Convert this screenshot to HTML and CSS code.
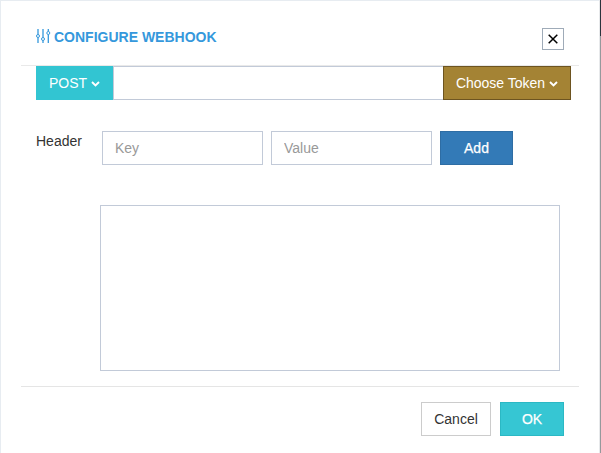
FILE: index.html
```html
<!DOCTYPE html>
<html lang="en">
<head>
<meta charset="utf-8">
<title>Configure Webhook</title>
<link rel="stylesheet" href="styles.css">
</head>
<body>
<main class="dialog">
  <header class="dialog-header">
    <svg class="sliders" width="15" height="15" viewBox="0 0 15 15" fill="none" stroke="currentColor">
      <path stroke-width="1.300" d="M2 1v5.500M2 9.500v5.500M7 1v8.500M7 12.500v2.500M12.300 1v2.500M12.300 6.500V15"/>
      <circle cx="2" cy="8" r="1.500"/><circle cx="7" cy="11" r="1.500"/><circle cx="12.300" cy="5" r="1.500"/>
    </svg>
    <h1 class="title">CONFIGURE WEBHOOK</h1>
    <button class="close" aria-label="Close">
      <svg width="10" height="10" viewBox="0 0 10 10" fill="none" stroke="#000" stroke-width="1.500"><path d="M.7.7l8.600 8.600M9.300.7L.7 9.300"/></svg>
    </button>
  </header>
  <div class="url-row">
    <button class="btn method">POST<svg class="chevron" viewBox="0 0 9 6"><path d="M1 1l3.500 3.500L8 1"/></svg></button>
    <input class="field url" type="text" aria-label="URL">
    <button class="btn token">Choose Token<svg class="chevron" viewBox="0 0 9 6"><path d="M1 1l3.500 3.500L8 1"/></svg></button>
  </div>
  <div class="header-row">
    <span class="label">Header</span>
    <input class="field pair" type="text" placeholder="Key">
    <input class="field pair" type="text" placeholder="Value">
    <button class="btn add">Add</button>
  </div>
  <textarea class="field body" aria-label="Body"></textarea>
  <footer class="dialog-footer">
    <button class="btn cancel">Cancel</button>
    <button class="btn ok">OK</button>
  </footer>
</main>
<div class="backdrop"></div>
</body>
</html>
```
FILE: styles.css
```css
* { box-sizing: border-box; }
body {
  margin: 0;
  height: 453px;
  display: flex;
  overflow: hidden;
  background: #fff;
  color: #333;
  font: 14px/20px "Liberation Sans", Arial, sans-serif;
}
button, input, textarea { margin: 0; font: inherit; border-radius: 0; }
.dialog {
  width: 599px;
  height: 453px;
  padding: 0 20px;
  border: solid #e7ecf1;
  border-width: 1px 0 0 1px;
}
.backdrop {
  width: 2px;
  border-left: 1px solid #e7e9eb;
  background: linear-gradient(#2b343d 36px, #96999c 36px);
}
.dialog-header {
  display: flex;
  align-items: flex-start;
  height: 65px;
  padding: 27px 15px 0;
  border-bottom: 1px solid #e9e9e9;
  color: #3598dc;
}
.sliders { margin-right: 3px; }
.title { margin: 0; font-size: 14px; line-height: 18px; }
.close {
  display: flex;
  align-items: center;
  justify-content: center;
  width: 22px;
  height: 22px;
  margin-left: auto;
  padding: 0;
  border: 1px solid #9fabb8;
  background: #fff;
}
.url-row { display: flex; margin: 0 8px 0 15px; }
.btn { height: 34px; padding: 0; border: 1px solid; color: #fff; text-align: center; }
.field { height: 34px; padding: 6px 12px; border: 1px solid #c2cad8; background: #fff; color: #555; outline: 0; }
.field::placeholder { color: #999; opacity: 1; }
.method { width: 77px; background: #32c5d2; border-color: #32c5d2; }
.url { flex: 1; min-width: 0; border-right: 0; }
.token { width: 128px; background: #a48334; border-color: #6d5420; }
.chevron { width: 9px; height: 6px; margin-left: 4px; vertical-align: 1.5px; fill: none; stroke: currentColor; stroke-width: 1.9; }
.header-row { display: flex; gap: 8px; margin: 31px 0 0 15px; }
.label { width: 58px; }
.pair { width: 161px; }
.add { width: 73px; background: #337ab7; border-color: #2e6da4; }
.add, .ok { -webkit-text-stroke: 0.25px currentColor; }
.body { display: block; width: 460px; height: 166px; margin: 40px 0 0 79px; resize: none; }
.dialog-footer {
  display: flex;
  justify-content: flex-end;
  gap: 9px;
  margin-top: 15px;
  padding: 15px 15px 0 0;
  border-top: 1px solid #e5e5e5;
}
.cancel { width: 70px; background: #fff; border-color: #ccc; color: #333; }
.ok { width: 64px; background: #36c6d3; border-color: #2bb8c4; }
```
